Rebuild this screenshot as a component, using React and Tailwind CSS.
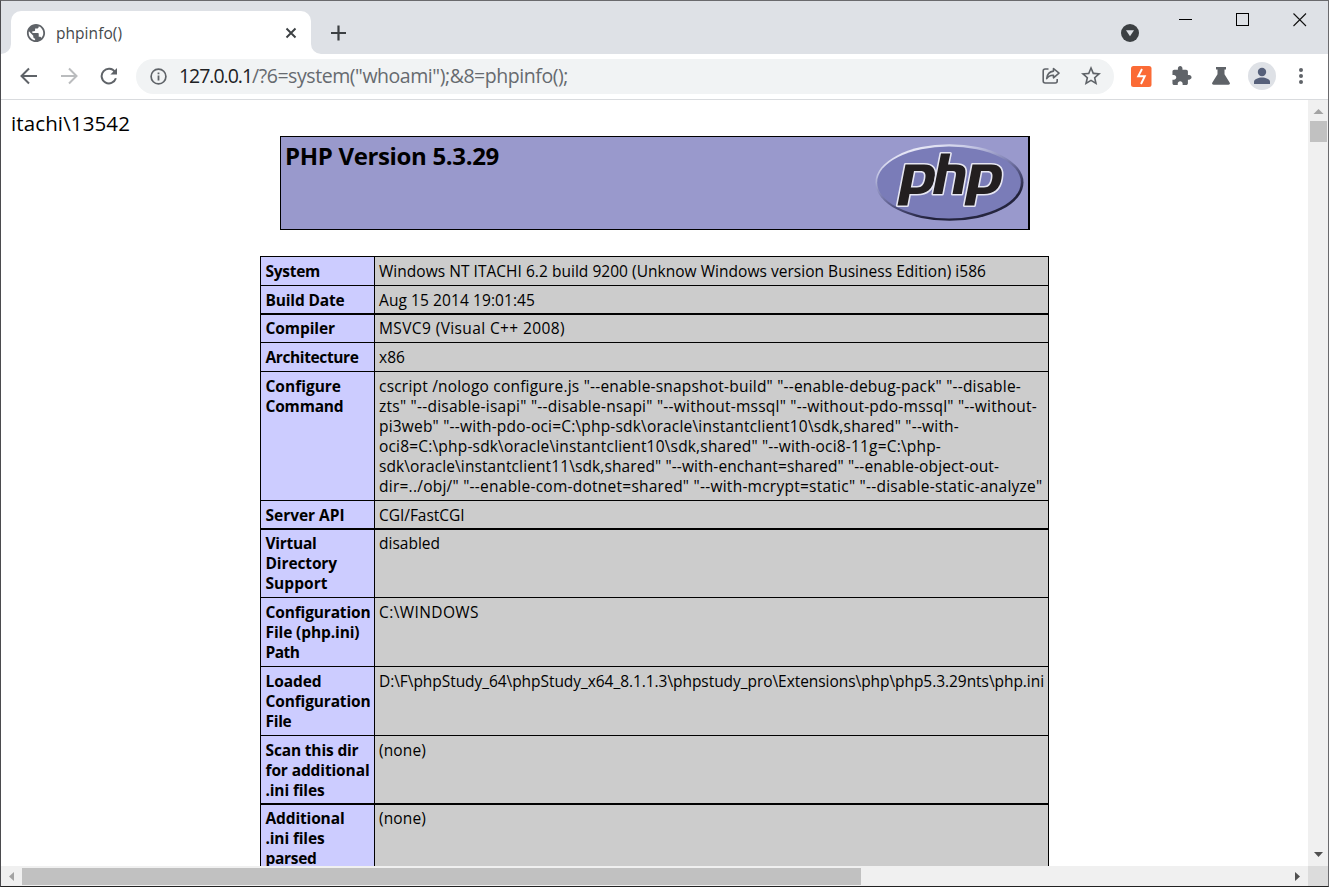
import React, { useLayoutEffect, useRef, useState } from "react";

// Spreads one line of text over a fixed width by adjusting its tracking.
function Fit({ w, children, className = "" }) {
  const ref = useRef(null);
  const [gap, setGap] = useState(0);
  useLayoutEffect(() => {
    const natural = ref.current.getBoundingClientRect().width;
    setGap((w - natural) / String(children).length);
  }, []);
  return (
    <div className={className + " flex"}>
      <span ref={ref} className="whitespace-pre" style={{ letterSpacing: gap + "px" }}>
        {children}
      </span>
    </div>
  );
}

const rows = [
  { h: "h-[29px] border-t pt-1", k: [["System", 54.5]], v: [["Windows NT ITACHI 6.2 build 9200 (Unknow Windows version Business Edition) i586", 607]] },
  { h: "h-[28px] border-t pt-1", k: [["Build Date", 79]], v: [["Aug 15 2014 19:01:45", 156]] },
  { h: "h-[29px] border-t-2 pt-[3px]", k: [["Compiler", 69.5]], v: [["MSVC9 (Visual C++ 2008)", 186]] },
  { h: "h-[29px] border-t pt-1", k: [["Architecture", 93]], v: [["x86", 26]] },
  {
    h: "h-[129px] border-t pt-1",
    k: [["Configure", 75.5], ["Command", 78]],
    v: [
      ['cscript /nologo configure.js "--enable-snapshot-build" "--enable-debug-pack" "--disable-', 642],
      ['zts" "--disable-isapi" "--disable-nsapi" "--without-mssql" "--without-pdo-mssql" "--without-', 658],
      ['pi3web" "--with-pdo-oci=C:\\php-sdk\\oracle\\instantclient10\\sdk,shared" "--with-', 580],
      ['oci8=C:\\php-sdk\\oracle\\instantclient10\\sdk,shared" "--with-oci8-11g=C:\\php-', 562],
      ['sdk\\oracle\\instantclient11\\sdk,shared" "--with-enchant=shared" "--enable-object-out-', 620],
      ['dir=../obj/" "--enable-com-dotnet=shared" "--with-mcrypt=static" "--disable-static-analyze"', 663.5],
    ],
  },
  { h: "h-[28px] border-t pt-1", k: [["Server API", 79]], v: [["CGI/FastCGI", 85.5]] },
  { h: "h-[69px] border-t-2 pt-[3px]", k: [["Virtual", 51], ["Directory", 71.5], ["Support", 62]], v: [["disabled", 61]] },
  { h: "h-[69px] border-t pt-1", k: [["Configuration", 105], ["File (php.ini)", 94], ["Path", 34]], v: [["C:\\WINDOWS", 100]] },
  {
    h: "h-[69px] border-t pt-1",
    k: [["Loaded", 56], ["Configuration", 105], ["File", 26]],
    v: [["D:\\F\\phpStudy_64\\phpStudy_x64_8.1.1.3\\phpstudy_pro\\Extensions\\php\\php5.3.29nts\\php.ini", 665]],
  },
  { h: "h-[68px] border-t pt-1", k: [["Scan this dir", 93], ["for additional", 104], [".ini files", 59]], v: [["(none)", 47]] },
  { h: "h-[69px] border-t-2 pt-[3px]", k: [["Additional", 79], [".ini files", 59], ["parsed", 51]], v: [["(none)", 47]] },
];

function Row({ row }) {
  return (
    <div className="flex w-[789px] shrink-0">
      <div className={row.h + " w-[115px] border-r border-l border-black bg-[#ccccff] pl-[4.5px] font-bold"}>
        {row.k.map(([t, w], i) => (
          <Fit key={i} w={w} className="h-5">{t}</Fit>
        ))}
      </div>
      <div className={row.h + " w-[674px] border-r border-black bg-[#cccccc] pl-1"}>
        {row.v.map(([t, w], i) => (
          <Fit key={i} w={w} className="h-5">{t}</Fit>
        ))}
      </div>
    </div>
  );
}

function PhpLogo() {
  return (
    <svg width="150" height="80" viewBox="0 0 150 80">
      <defs>
        <linearGradient id="rim" x1="0.25" y1="0" x2="0.8" y2="1">
          <stop offset="0" stopColor="#f4f4fc" />
          <stop offset="0.2" stopColor="#c4c6e4" />
          <stop offset="0.42" stopColor="#8082b4" />
          <stop offset="0.6" stopColor="#4c4d78" />
          <stop offset="0.8" stopColor="#20203a" />
          <stop offset="1" stopColor="#2a2a44" />
        </linearGradient>
        <filter id="soft"><feGaussianBlur stdDeviation="0.6" /></filter>
      </defs>
      <ellipse cx="74.500" cy="39.500" rx="74" ry="38.300" fill="url(#rim)" />
      <ellipse cx="74" cy="39.400" rx="71.800" ry="36" fill="#7a7cb8" filter="url(#soft)" />
      <g fill="#231f20" fillRule="evenodd" stroke="#e6e6f2" strokeWidth="3.200" strokeLinejoin="round" paintOrder="stroke">
        <path d="M30.500 21.500H49c9 0 12.200 4.500 10.500 14C58 46 51.500 51 42 51h-7.500l-2.200 11.500H22.500zM39 28l-3.200 16.500H42c5 0 7.300-3.500 8.200-8.500 1-5.500-.200-8-5-8z" />
        <path d="M66 10.500h9.300L73 21.500h8c8 0 10.500 3.500 9.200 10.500L86.800 51H77.500l3.300-18c.700-4-.200-5-4-5h-5L67.300 51H58z" />
        <path d="M97.500 21.500H116c9 0 12.200 4.500 10.500 14C125 46 118.500 51 109 51h-7.500l-2.200 11.500H89.500zM106 28l-3.200 16.500h6.200c5 0 7.300-3.500 8.200-8.500 1-5.500-.200-8-5-8z" />
      </g>
    </svg>
  );
}

function TabStrip() {
  return (
    <div className="flex h-[53px] shrink-0 bg-[#dee1e6]">
      <div className="flex w-[10px] items-end">
        <svg width="10" height="10"><path d="M0 10A10 10 0 0 0 10 0V10z" fill="#fff" /></svg>
      </div>
      <div className="mt-[10px] flex h-[43px] w-[300px] items-center rounded-t-[10px] bg-white pl-[15px]">
        <svg width="20" height="20" viewBox="1 1 22 22" className="mt-px">
          <path fill="#5f6368" d="M12 2C6.480 2 2 6.480 2 12s4.480 10 10 10 10-4.480 10-10S17.520 2 12 2zm-1 17.930c-3.950-.490-7-3.850-7-7.930 0-.620.080-1.210.210-1.790L9 15v1c0 1.100.900 2 2 2v1.930zm6.900-2.540c-.260-.810-1-1.390-1.900-1.390h-1v-3c0-.550-.450-1-1-1H8v-2h2c.550 0 1-.450 1-1V7h2c1.100 0 2-.900 2-2v-.410c2.930 1.190 5 4.060 5 7.410 0 2.080-.800 3.970-2.100 5.390z" />
        </svg>
        <Fit w={66} className="ml-[10px] w-[225px] pt-px text-[15.5px] leading-5 text-[#45494d]">phpinfo()</Fit>
        <svg width="14" height="14" className="ml-[3px]"><path d="M2.500 2.500l9 9M11.500 2.500l-9 9" stroke="#3c4043" strokeWidth="1.900" /></svg>
      </div>
      <div className="flex w-[10px] items-end">
        <svg width="10" height="10"><path d="M0 0A10 10 0 0 0 10 10H0z" fill="#fff" /></svg>
      </div>
      <svg width="16" height="16" className="mt-6 ml-[9px]"><path d="M8.500 .500v15M1 8h15" stroke="#3c4043" strokeWidth="2.200" /></svg>
      <svg width="18" height="18" className="mt-[23px] ml-[775px]">
        <circle cx="9" cy="9" r="9" fill="#3c4043" />
        <path d="M5 6.300h8L9 12.300z" fill="#dee1e6" />
      </svg>
      <svg width="14" height="14" className="mt-3 ml-10" shapeRendering="crispEdges"><path d="M0 6h13v1H0z" fill="#000" /></svg>
      <svg width="14" height="14" className="mt-3 ml-[43px]" shapeRendering="crispEdges"><path d="M.500.500h12v12H.500z" fill="none" stroke="#000" /></svg>
      <svg width="14" height="14" className="mt-3 ml-[43px]"><path d="M.500.500l12.500 12.500M13 .500L.500 13" stroke="#111" strokeWidth="1.100" /></svg>
    </div>
  );
}

function Toolbar() {
  return (
    <div className="flex h-[46px] shrink-0 items-center border-b border-[#d9dbde] bg-white pb-px">
      <svg width="18" height="18" className="ml-[19px]"><path d="M17 9H2M9 1.500L1.500 9 9 16.500" fill="none" stroke="#5f6368" strokeWidth="2" /></svg>
      <svg width="18" height="18" className="ml-[22px]"><path d="M1 9h15M9 1.500L16.500 9 9 16.500" fill="none" stroke="#babcbe" strokeWidth="2" /></svg>
      <svg width="18" height="18" className="ml-[22px]">
        <path d="M15 5A7.300 7.300 0 1 0 15.900 11.300" fill="none" stroke="#5f6368" strokeWidth="2" />
        <path d="M17 1v6.600h-6.600z" fill="#5f6368" />
      </svg>
      <div className="ml-[18px] flex h-[35px] w-[978px] items-center rounded-full bg-[#f1f3f4] pl-[14px]">
        <svg width="17" height="17"><circle cx="8.500" cy="8.500" r="7.400" fill="none" stroke="#5f6368" strokeWidth="1.700" /><path d="M7.600 7.500h1.800v5H7.600zM7.600 4.400h1.800v1.800H7.600z" fill="#5f6368" /></svg>
        <div className="ml-[12px] flex w-[861px] text-[19.5px] leading-6">
          <Fit w={73} className="text-[#202124]">127.0.0.1</Fit>
          <Fit w={316} className="text-[#666a6f]">{'/?6=system("whoami");&8=phpinfo();'}</Fit>
        </div>
        <svg width="19" height="18" viewBox="0 0 19 18" className="ml-[2px]" fill="none" stroke="#5f6368" strokeWidth="1.600" strokeLinejoin="round">
          <path d="M6.500 2H3.200C2 2 1.200 2.800 1.200 4v10c0 1.200.800 2 2 2h10c1.200 0 2-.800 2-2v-2" />
          <path d="M11.500 1.500l5.500 4.700-5.500 4.600V8.200C8.300 8 6.300 9.200 4.700 11.600c.400-4 2.600-7 6.800-7.500z" />
        </svg>
        <svg width="20" height="20" viewBox="2 2 20 20" className="ml-[20px]">
          <path fill="#5f6368" d="M22 9.240l-7.190-.620L12 2 9.190 8.630 2 9.240l5.460 4.730L5.820 21 12 17.270 18.180 21l-1.630-7.030L22 9.240zM12 15.400l-3.760 2.270 1-4.280-3.320-2.880 4.380-.380L12 6.100l1.710 4.040 4.380.380-3.320 2.880 1 4.280L12 15.400z" />
        </svg>
      </div>
      <svg width="21" height="21" className="ml-[17px]"><rect width="20.500" height="21" rx="2.500" fill="#fb6b36" /><path d="M11 3L7.200 10.200h6.600L10 18" fill="none" stroke="#fff" strokeWidth="1.900" /></svg>
      <svg width="20" height="20" viewBox="1.500 1 22 22" className="ml-[20px]">
        <path fill="#5f6368" d="M20.500 11H19V7c0-1.100-.900-2-2-2h-4V3.500C13 2.120 11.880 1 10.500 1S8 2.120 8 3.500V5H4c-1.100 0-1.990.900-1.990 2v3.800H3.500c1.490 0 2.700 1.210 2.700 2.700s-1.210 2.700-2.700 2.700H2V20c0 1.100.900 2 2 2h3.800v-1.500c0-1.490 1.210-2.700 2.700-2.700 1.490 0 2.700 1.210 2.700 2.700V22H17c1.100 0 2-.900 2-2v-4h1.500c1.380 0 2.500-1.120 2.500-2.500S21.880 11 20.500 11z" />
      </svg>
      <svg width="18" height="18" className="ml-[20px]"><path d="M4 0h10v2.400h-1.500v4.800L17.600 15.600c.700 1.200.200 2.200-1.200 2.200H1.600c-1.400 0-1.900-1-1.200-2.200L5.500 7.200V2.400H4z" fill="#5f6368" /></svg>
      <svg width="28" height="28" className="ml-[18px]"><circle cx="14" cy="14" r="14" fill="#dee1e6" /><circle cx="14" cy="10" r="4.200" fill="#56607a" /><path d="M6 22v-2.200c0-2.700 4.500-4.300 8-4.300s8 1.600 8 4.300V22z" fill="#56607a" /></svg>
      <svg width="6" height="18" className="ml-[22px]" fill="#5f6368"><circle cx="3" cy="3" r="2" /><circle cx="3" cy="9" r="2" /><circle cx="3" cy="15" r="2" /></svg>
    </div>
  );
}

function Page() {
  return (
    <div className="h-[766px] w-[1307px] overflow-hidden bg-white text-[15.5px] leading-5 text-black">
      <Fit w={119} className="h-9 pt-[11px] pl-[10px] text-[20.5px] leading-6">{"itachi\\13542"}</Fit>
      <div className="ml-[279px] flex h-[94px] w-[750px] justify-between border border-r-2 border-black bg-[#9999cc]">
        <Fit w={214} className="pt-[3px] pl-[4px] text-[24px] leading-8 font-bold">PHP Version 5.3.29</Fit>
        <div className="mt-[6px] mr-[3px]"><PhpLogo /></div>
      </div>
      <div className="mt-[26px] ml-[259px] flex flex-col">
        {rows.map((r, i) => <Row key={i} row={r} />)}
      </div>
    </div>
  );
}

export default function App() {
  return (
    <div className="flex h-[887px] w-[1329px] flex-col overflow-hidden border border-[#6a6a6d] border-b-[#222] border-l-[#4b4b4e] font-['Open_Sans','Noto_Sans',sans-serif]">
      <TabStrip />
      <Toolbar />
      <div className="flex h-[766px] shrink-0">
        <Page />
        <div className="flex w-5 flex-col bg-[#f0f0f0]">
          <svg width="20" height="21"><path d="M5.500 14h10l-5-5z" fill="#a3a3a3" /></svg>
          <div className="ml-[2px] h-[21px] w-[17px] bg-[#c1c1c1]" />
          <svg width="20" height="20" className="mt-auto"><path d="M6 6h9l-4.500 5z" fill="#505050" /></svg>
        </div>
      </div>
      <div className="flex h-5 shrink-0 bg-[#f0f0f0]">
        <svg width="21" height="20"><path d="M13 6v9l-5-4.500z" fill="#a3a3a3" /></svg>
        <div className="mt-[2px] h-[17px] w-[839px] bg-[#c1c1c1]" />
        <svg width="20" height="20" className="ml-auto"><path d="M7 6v9l5-4.500z" fill="#505050" /></svg>
        <div className="w-5 bg-[#dcdcdc]" />
      </div>
    </div>
  );
}
